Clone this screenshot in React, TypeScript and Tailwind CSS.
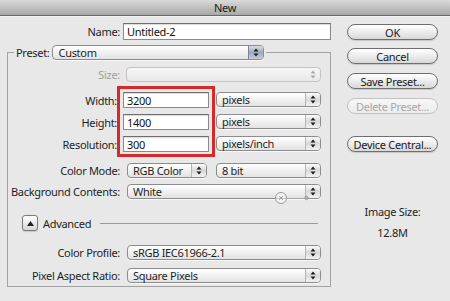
import React from "react";

const font = { fontFamily: '"Noto Sans", "DejaVu Sans", sans-serif' };

function Arrows({ dark }: { dark?: boolean }) {
  return (
    <div
      className={
        "flex h-full w-[15px] items-center justify-center rounded-r-[3px] border-l " +
        (dark
          ? "border-[#7a8594] bg-gradient-to-b from-[#d6dde8] via-[#9ea9b9] to-[#c4ccd8]"
          : "border-[#b5b5b5] bg-gradient-to-b from-[#fbfbfb] via-[#d9d9d9] to-[#f2f2f2]")
      }
    >
      <svg width="6" height="9" viewBox="0 0 6 9">
        <path d="M3 0.5 L5.5 3.5 L0.5 3.5 Z" fill="#1c1c1c" />
        <path d="M3 8.5 L5.5 5.5 L0.5 5.5 Z" fill="#1c1c1c" />
      </svg>
    </div>
  );
}

function Popup({
  text,
  w,
  dark,
  disabled,
}: {
  text?: string;
  w: string;
  dark?: boolean;
  disabled?: boolean;
}) {
  return (
    <div
      className={
        "flex h-[15px] items-stretch rounded-[4px] border " +
        (disabled
          ? "border-[#c4c4c4] bg-gradient-to-b from-[#f6f6f6] to-[#e9e9e9] "
          : "border-[#8c8c8c] bg-gradient-to-b from-white via-[#f1f1f1] to-[#e2e2e2] shadow-[0_1px_0_rgba(255,255,255,0.7)] ") +
        w
      }
    >
      <div className="flex flex-1 items-center whitespace-nowrap pl-[5px] text-[11px] leading-none text-[#1e1e1e]">
        {text}
      </div>
      {disabled ? (
        <div className="flex h-full w-[15px] items-center justify-center">
          <svg width="6" height="9" viewBox="0 0 6 9">
            <path d="M3 0.5 L5.5 3.5 L0.5 3.5 Z" fill="#a8a8a8" />
            <path d="M3 8.5 L5.5 5.5 L0.5 5.5 Z" fill="#a8a8a8" />
          </svg>
        </div>
      ) : (
        <Arrows dark={dark} />
      )}
    </div>
  );
}

function Field({ text, w }: { text: string; w: string }) {
  return (
    <div
      className={
        "flex h-[16px] items-center border border-[#8a8a8a] border-t-[#6e6e6e] bg-white pl-[3px] text-[11px] leading-none text-[#111] shadow-[inset_0_1px_1px_rgba(0,0,0,0.15)] " +
        w
      }
    >
      {text}
    </div>
  );
}

function Btn({ text, disabled }: { text: string; disabled?: boolean }) {
  return (
    <div
      className={
        "flex h-[16px] w-[91px] items-center justify-center whitespace-nowrap rounded-full border text-[11px] leading-none " +
        (disabled
          ? "border-[#c2c2c2] bg-gradient-to-b from-[#f7f7f7] to-[#ececec] text-[#a8a8a8]"
          : "border-[#6f6f6f] bg-gradient-to-b from-white via-[#ededed] to-[#d8d8d8] text-[#1a1a1a] shadow-[0_1px_1px_rgba(0,0,0,0.15)]")
      }
    >
      {text}
    </div>
  );
}

function Label({ text, w, gray }: { text: string; w: string; gray?: boolean }) {
  return (
    <div
      className={
        "flex shrink-0 justify-end whitespace-nowrap text-[11px] leading-none " +
        (gray ? "text-[#a0a0a0] " : "text-[#1e1e1e] ") +
        w
      }
    >
      <span>{text}</span>
    </div>
  );
}

export default function App() {
  return (
    <div
      className="relative h-[301px] w-[450px] overflow-hidden bg-[#e8e8e8] tracking-[-0.3px]"
      style={font}
    >
      {/* title bar */}
      <div className="flex h-[16px] items-center justify-center border-b border-[#6a6a6a] bg-gradient-to-b from-[#dadada] to-[#a8a8a8] text-[11px] leading-none text-[#1a1a1a]">
        New
      </div>
      <div className="h-px bg-[#f4f4f4]" />

      <div className="flex">
        {/* left column */}
        <div className="w-[340px]">
          {/* Name */}
          <div className="mt-[6px] flex items-center">
            <Label text="Name:" w="w-[120px]" />
            <div className="ml-[3px]">
              <Field text="Untitled-2" w="w-[208px] h-[17px]" />
            </div>
          </div>

          {/* fieldset */}
          <fieldset className="ml-[7px] mt-[5px] w-[324px] border border-[#a2a2a2] pb-[3px]">
            <legend className="ml-[6px] flex items-center pl-[2px] pr-[2px]">
              <span className="mr-[3px] text-[11px] leading-none text-[#1e1e1e]">
                Preset:
              </span>
              <Popup text="Custom" w="w-[212px]" dark />
            </legend>

            {/* Size */}
            <div className="mt-[7px] flex items-center">
              <Label text="Size:" w="w-[112px]" gray />
              <div className="ml-[6px]">
                <Popup w="w-[195px]" disabled />
              </div>
            </div>

            {/* Width / Height / Resolution */}
            <div className="mt-[4px] flex">
              <div className="flex w-[109px] flex-col gap-[6px] pt-[6px]">
                {["Width:", "Height:", "Resolution:"].map((t) => (
                  <div
                    key={t}
                    className="flex h-[16px] items-center justify-end text-[11px] leading-none text-[#1e1e1e]"
                  >
                    {t}
                  </div>
                ))}
              </div>
              <div className="flex w-[98px] flex-col gap-[6px] border-[3px] border-[#d42a2a] px-[3px] pb-[2px] pt-[3px]">
                <Field text="3200" w="w-[86px]" />
                <Field text="1400" w="w-[86px]" />
                <Field text="300" w="w-[86px]" />
              </div>
              <div className="ml-[1px] flex flex-col gap-[7px] pt-[6px]">
                <Popup text="pixels" w="w-[105px]" />
                <Popup text="pixels" w="w-[105px]" />
                <Popup text="pixels/inch" w="w-[105px]" />
              </div>
            </div>

            {/* Color Mode */}
            <div className="mt-[6px] flex items-center">
              <Label text="Color Mode:" w="w-[112px]" />
              <div className="ml-[7px]">
                <Popup text="RGB Color" w="w-[80px]" />
              </div>
              <div className="ml-[9px]">
                <Popup text="8 bit" w="w-[105px]" />
              </div>
            </div>

            {/* Background Contents */}
            <div className="mt-[6px] flex items-center">
              <Label text="Background Contents:" w="w-[112px]" />
              <div className="ml-[7px]">
                <Popup text="White" w="w-[194px]" />
              </div>
            </div>

            {/* Advanced */}
            <div className="mt-[16px] flex items-center">
              <div className="ml-[14px] flex h-[16px] w-[16px] shrink-0 items-center justify-center rounded-[3px] border border-[#7a7a7a] bg-gradient-to-b from-white to-[#d6d6d6] shadow-[0_1px_1px_rgba(0,0,0,0.15)]">
                <svg width="7" height="5" viewBox="0 0 7 5">
                  <path d="M3.5 0 L7 5 L0 5 Z" fill="#222" />
                </svg>
              </div>
              <span className="ml-[5px] text-[11px] leading-none text-[#1e1e1e]">
                Advanced
              </span>
              <div className="ml-[9px] h-[1px] w-[218px] shrink-0 bg-[#9a9a9a]" />
            </div>

            {/* Color Profile */}
            <div className="mt-[14px] flex items-center">
              <Label text="Color Profile:" w="w-[112px]" />
              <div className="ml-[7px]">
                <Popup text="sRGB IEC61966-2.1" w="w-[194px]" />
              </div>
            </div>

            {/* Pixel Aspect Ratio */}
            <div className="mt-[8px] flex items-center">
              <Label text="Pixel Aspect Ratio:" w="w-[112px]" />
              <div className="ml-[7px]">
                <Popup text="Square Pixels" w="w-[194px]" />
              </div>
            </div>
          </fieldset>
        </div>

        {/* right column */}
        <div className="ml-[7px] flex w-[91px] flex-col">
          <div className="mt-[7px]">
            <Btn text="OK" />
          </div>
          <div className="mt-[8px]">
            <Btn text="Cancel" />
          </div>
          <div className="mt-[9px]">
            <Btn text="Save Preset..." />
          </div>
          <div className="mt-[9px]">
            <Btn text="Delete Preset..." disabled />
          </div>
          <div className="mt-[22px]">
            <Btn text="Device Central..." />
          </div>
          <div className="mt-[54px] text-center text-[11px] leading-none text-[#1e1e1e]">
            Image Size:
          </div>
          <div className="mt-[10px] text-center text-[11px] leading-none text-[#1e1e1e]">
            12.8M
          </div>
        </div>
      </div>

      {/* mouse cursor artifact over the popup */}
      <svg
        className="absolute left-[274px] top-[191px]"
        width="40"
        height="14"
        viewBox="0 0 40 14"
      >
        <circle cx="7" cy="7" r="5.5" fill="rgba(255,255,255,0.5)" stroke="#9a9a9a" strokeWidth="1" />
        <path d="M5 5 L9 9 M9 5 L5 9" stroke="#9a9a9a" strokeWidth="0.9" />
        <line x1="12.5" y1="7.5" x2="31" y2="7.5" stroke="#a8a8a8" strokeWidth="1" />
        <circle cx="32.5" cy="7" r="1.8" fill="#b0b0b0" stroke="#8a8a8a" strokeWidth="0.6" />
      </svg>
    </div>
  );
}
